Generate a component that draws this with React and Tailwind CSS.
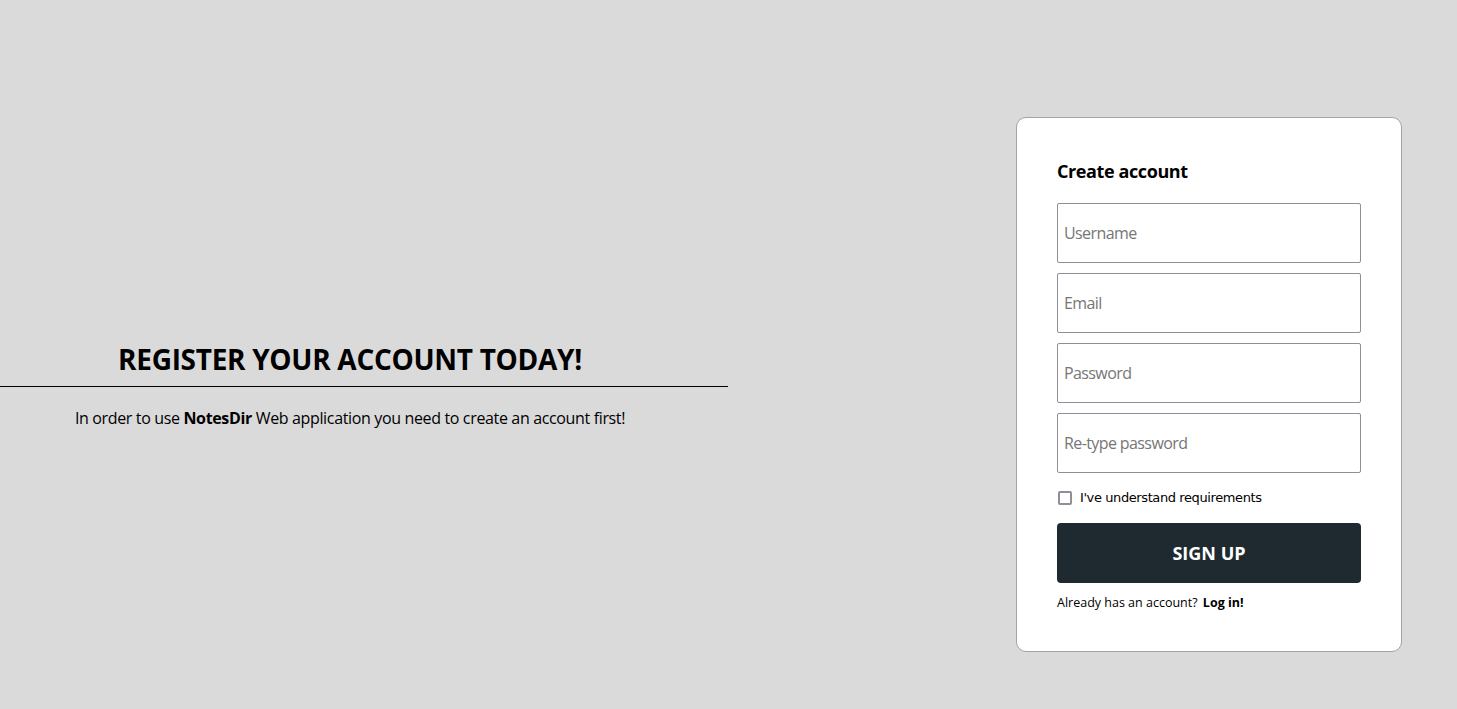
import React from "react";

const fields = [
  { type: "text", placeholder: "Username" },
  { type: "email", placeholder: "Email" },
  { type: "password", placeholder: "Password" },
  { type: "password", placeholder: "Re-type password" },
];

const App = () => {
  return (
    <div className="min-h-[709px] w-full bg-[#dadada] text-black pt-[60px] flex items-center font-['Open_Sans',sans-serif]">
      {/* Left intro */}
      <div className="w-[728px] shrink-0 flex flex-col">
        <h1 className="w-[700px] text-center text-[28px] leading-[36px] font-bold tracking-[-0.3px]">REGISTER YOUR ACCOUNT TODAY!</h1>
        <hr className="mt-[9px] border-0 border-t border-black w-full" />
        <p className="w-[700px] text-center text-[16px] mt-[20px] leading-[22px] tracking-[-0.35px]">
          In order to use <b>NotesDir</b> Web application you need to create an account first!
        </p>
      </div>

      {/* Register card */}
      <div className="ml-auto mr-[55px] w-[386px] bg-white border border-[#a3a3a3] rounded-[10px] p-[40px]">
        <h2 className="text-[18px] font-bold leading-[26px] mb-[19px] tracking-[-0.4px]">Create account</h2>
        <form className="flex flex-col gap-[10px]" onSubmit={(e) => e.preventDefault()}>
          {fields.map((f) => (
            <input
              key={f.placeholder}
              type={f.type}
              placeholder={f.placeholder}
              className="w-full h-[60px] border border-[#8f8e99] rounded-[2px] px-[6px] text-[16px] tracking-[-0.6px] placeholder:text-[#767676] outline-none"
            />
          ))}
          <label className="flex items-center gap-[8px] mt-[6px] text-[13px] leading-[18px] font-['DejaVu_Sans',sans-serif] tracking-[-0.4px]">
            <span className="w-[14px] h-[14px] border-2 border-[#8f8e99] rounded-[2px] bg-white ml-[1px]" />
            I've understand requirements
          </label>
          <button type="submit" className="mt-[6px] h-[60px] w-full bg-[#1f2a30] text-white rounded-[4px] text-[18px] font-bold">
            SIGN UP
          </button>
          <p className="text-[12.5px] leading-[16px] mt-[2px]">
            Already has an account? <b className="ml-[2px]">Log in!</b>
          </p>
        </form>
      </div>
    </div>
  );
};

export default App;
